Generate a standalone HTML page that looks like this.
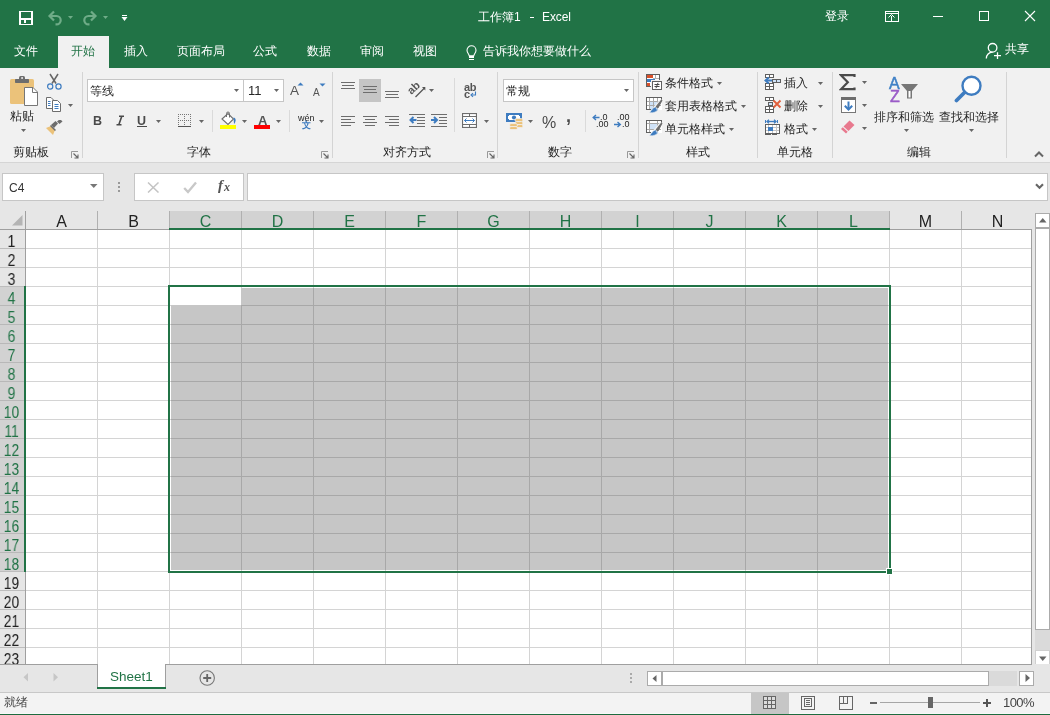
<!DOCTYPE html>
<html><head><meta charset="utf-8"><style>
html,body{margin:0;padding:0;width:1050px;height:715px;overflow:hidden;background:#fff}
body{position:relative;font-family:"Liberation Sans",sans-serif}
.a{position:absolute}
.t{white-space:nowrap;will-change:transform}
.hd{font-size:16px;line-height:16px;text-align:center}
.rn{font-size:16px;line-height:16px;text-align:center;transform:scaleX(0.86);transform-origin:11.5px 0}
</style></head><body>
<div class="a" style="left:0px;top:0px;width:1050px;height:68px;background:#217346;"></div>
<div class="a" style="left:19px;top:11px;width:14px;height:1px;background:#fff;"></div>
<div class="a" style="left:19px;top:24px;width:14px;height:1px;background:#fff;"></div>
<div class="a" style="left:19px;top:11px;width:2px;height:14px;background:#fff;"></div>
<div class="a" style="left:31px;top:11px;width:2px;height:14px;background:#fff;"></div>
<div class="a" style="left:21px;top:18px;width:10px;height:2px;background:#fff;"></div>
<div class="a" style="left:24px;top:20px;width:2px;height:3px;background:#fff;"></div>
<svg class="a" style="left:47px;top:9px;" width="17" height="17" viewBox="0 0 17 17"><path d="M3 7 H9.5 A4.2 4.2 0 0 1 9.5 15.4 H8.5" fill="none" stroke="#6fac88" stroke-width="2.2"/><path d="M7 2.5 L2.5 7 L7 11.5" fill="none" stroke="#6fac88" stroke-width="2.2"/></svg>
<svg class="a" style="left:68px;top:16px;" width="6" height="4" viewBox="0 0 6 4"><path d="M0 0H5L2.5 3Z" fill="#6fac88"/></svg>
<svg class="a" style="left:81px;top:9px;" width="17" height="17" viewBox="0 0 17 17"><path d="M14 7 H7.5 A4.2 4.2 0 0 0 7.5 15.4 H8.5" fill="none" stroke="#6fac88" stroke-width="2.2"/><path d="M10 2.5 L14.5 7 L10 11.5" fill="none" stroke="#6fac88" stroke-width="2.2"/></svg>
<svg class="a" style="left:103px;top:16px;" width="6" height="4" viewBox="0 0 6 4"><path d="M0 0H5L2.5 3Z" fill="#6fac88"/></svg>
<div class="a" style="left:122px;top:15px;width:5px;height:1px;background:#fff;"></div>
<svg class="a" style="left:121px;top:17px;" width="7" height="5" viewBox="0 0 7 5"><path d="M0.5 0H6.5L3.5 4Z" fill="#fff"/></svg>
<div class="a t" style="left:478px;top:11px;font-size:12px;line-height:12px;color:#fff;">工作簿1</div>
<div class="a" style="left:530px;top:17px;width:4px;height:1px;background:#fff;"></div>
<div class="a t" style="left:542px;top:11px;font-size:12px;line-height:12px;color:#fff;letter-spacing:-0.1px">Excel</div>
<div class="a t" style="left:825px;top:10px;font-size:12px;line-height:12px;color:#fff;">登录</div>
<div class="a" style="left:885px;top:11px;width:14px;height:1px;background:#fff;"></div>
<div class="a" style="left:885px;top:21px;width:14px;height:1px;background:#fff;"></div>
<div class="a" style="left:885px;top:11px;width:1px;height:11px;background:#fff;"></div>
<div class="a" style="left:898px;top:11px;width:1px;height:11px;background:#fff;"></div>
<div class="a" style="left:885px;top:13px;width:14px;height:1px;background:#fff;"></div>
<div class="a" style="left:891px;top:16px;width:1px;height:5px;background:#fff;"></div>
<svg class="a" style="left:888px;top:14px;" width="7" height="4" viewBox="0 0 7 4"><path d="M0.5 3.5L3.5 0.5L6.5 3.5" fill="none" stroke="#fff" stroke-width="1"/></svg>
<div class="a" style="left:933px;top:16px;width:10px;height:1px;background:#fff;"></div>
<div class="a" style="left:979px;top:11px;width:10px;height:10px;border:1px solid #fff;box-sizing:border-box;"></div>
<svg class="a" style="left:1024px;top:10px;" width="12" height="12" viewBox="0 0 12 12"><path d="M1 1L11 11M11 1L1 11" stroke="#fff" stroke-width="1.1"/></svg>
<div class="a" style="left:58px;top:36px;width:51px;height:32px;background:#f1f1f1;"></div>
<div class="a t" style="left:14px;top:45px;font-size:12px;line-height:12px;color:#fff;">文件</div>
<div class="a t" style="left:124px;top:45px;font-size:12px;line-height:12px;color:#fff;">插入</div>
<div class="a t" style="left:177px;top:45px;font-size:12px;line-height:12px;color:#fff;">页面布局</div>
<div class="a t" style="left:253px;top:45px;font-size:12px;line-height:12px;color:#fff;">公式</div>
<div class="a t" style="left:307px;top:45px;font-size:12px;line-height:12px;color:#fff;">数据</div>
<div class="a t" style="left:360px;top:45px;font-size:12px;line-height:12px;color:#fff;">审阅</div>
<div class="a t" style="left:413px;top:45px;font-size:12px;line-height:12px;color:#fff;">视图</div>
<div class="a t" style="left:71px;top:45px;font-size:12px;line-height:12px;color:#217346;">开始</div>
<svg class="a" style="left:465px;top:45px;" width="13" height="16" viewBox="0 0 13 16"><path d="M4.2 10.8 C4 8.8 2 7.8 2 5.2 A4.5 4.5 0 0 1 11 5.2 C11 7.8 9 8.8 8.8 10.8 Z" fill="none" stroke="#fff" stroke-width="1.1"/><rect x="4" y="11" width="5" height="2" fill="#fff"/><rect x="4" y="14" width="5" height="1" fill="#fff"/></svg>
<div class="a t" style="left:483px;top:45px;font-size:12px;line-height:12px;color:#fff;">告诉我你想要做什么</div>
<svg class="a" style="left:984px;top:41px;" width="18" height="19" viewBox="0 0 18 19"><circle cx="8.6" cy="6.8" r="4.3" fill="none" stroke="#fff" stroke-width="1.3"/><path d="M2.3 17.5 C2.3 14 5 11 8.6 11.1" fill="none" stroke="#fff" stroke-width="1.3"/><path d="M13.5 11.2V18 M10 14.6H17" stroke="#fff" stroke-width="1.3"/></svg>
<div class="a t" style="left:1005px;top:43px;font-size:12px;line-height:12px;color:#fff;">共享</div>
<div class="a" style="left:0px;top:68px;width:1050px;height:94px;background:#f1f1f1;"></div>
<div class="a" style="left:0px;top:162px;width:1050px;height:1px;background:#d5d5d5;"></div>
<div class="a" style="left:82px;top:72px;width:1px;height:86px;background:#d4d4d4;"></div>
<div class="a" style="left:332px;top:72px;width:1px;height:86px;background:#d4d4d4;"></div>
<div class="a" style="left:497px;top:72px;width:1px;height:86px;background:#d4d4d4;"></div>
<div class="a" style="left:638px;top:72px;width:1px;height:86px;background:#d4d4d4;"></div>
<div class="a" style="left:757px;top:72px;width:1px;height:86px;background:#d4d4d4;"></div>
<div class="a" style="left:832px;top:72px;width:1px;height:86px;background:#d4d4d4;"></div>
<div class="a" style="left:1006px;top:72px;width:1px;height:86px;background:#d4d4d4;"></div>
<div class="a t" style="left:13px;top:146px;font-size:12px;line-height:12px;color:#262626;">剪贴板</div>
<div class="a t" style="left:187px;top:146px;font-size:12px;line-height:12px;color:#262626;">字体</div>
<div class="a t" style="left:383px;top:146px;font-size:12px;line-height:12px;color:#262626;">对齐方式</div>
<div class="a t" style="left:548px;top:146px;font-size:12px;line-height:12px;color:#262626;">数字</div>
<div class="a t" style="left:686px;top:146px;font-size:12px;line-height:12px;color:#262626;">样式</div>
<div class="a t" style="left:777px;top:146px;font-size:12px;line-height:12px;color:#262626;">单元格</div>
<div class="a t" style="left:907px;top:146px;font-size:12px;line-height:12px;color:#262626;">编辑</div>
<svg class="a" style="left:71px;top:151px;" width="8" height="8" viewBox="0 0 8 8"><path d="M0.5 7V0.5H7" fill="none" stroke="#999" stroke-width="1"/><path d="M2.5 2.5L6.5 6.5 M7 3.5V7H3.5" fill="none" stroke="#666" stroke-width="1.1"/></svg>
<svg class="a" style="left:321px;top:151px;" width="8" height="8" viewBox="0 0 8 8"><path d="M0.5 7V0.5H7" fill="none" stroke="#999" stroke-width="1"/><path d="M2.5 2.5L6.5 6.5 M7 3.5V7H3.5" fill="none" stroke="#666" stroke-width="1.1"/></svg>
<svg class="a" style="left:487px;top:151px;" width="8" height="8" viewBox="0 0 8 8"><path d="M0.5 7V0.5H7" fill="none" stroke="#999" stroke-width="1"/><path d="M2.5 2.5L6.5 6.5 M7 3.5V7H3.5" fill="none" stroke="#666" stroke-width="1.1"/></svg>
<svg class="a" style="left:627px;top:151px;" width="8" height="8" viewBox="0 0 8 8"><path d="M0.5 7V0.5H7" fill="none" stroke="#999" stroke-width="1"/><path d="M2.5 2.5L6.5 6.5 M7 3.5V7H3.5" fill="none" stroke="#666" stroke-width="1.1"/></svg>
<svg class="a" style="left:9px;top:75px;" width="31" height="32" viewBox="0 0 31 32"><rect x="1" y="4" width="24" height="25" rx="1.6" fill="#ebc27a"/><rect x="6" y="4" width="14" height="4" rx="0.8" fill="#6d6d6d"/><rect x="10" y="1" width="6" height="4" rx="1.5" fill="#6d6d6d"/><rect x="12.3" y="2.2" width="1.6" height="1.6" fill="#fff"/><path d="M15.5 12.5H24L28.5 17V30.5H15.5Z" fill="#fff" stroke="#777" stroke-width="1"/><path d="M23.5 12.5V17.5H28.5" fill="none" stroke="#777" stroke-width="1"/></svg>
<div class="a t" style="left:10px;top:110px;font-size:12px;line-height:12px;color:#262626;">粘贴</div>
<svg class="a" style="left:21px;top:129px;" width="6" height="4" viewBox="0 0 6 4"><path d="M0 0H5L2.5 3Z" fill="#666"/></svg>
<svg class="a" style="left:45px;top:73px;" width="18" height="18" viewBox="0 0 18 18"><path d="M5 1L11 10.5 M13 1L7 10.5" stroke="#666" stroke-width="1.5"/><circle cx="5.2" cy="13.5" r="2.6" fill="none" stroke="#3e7cc0" stroke-width="1.2"/><circle cx="13.5" cy="13.5" r="2.6" fill="none" stroke="#3e7cc0" stroke-width="1.2"/></svg>
<svg class="a" style="left:45px;top:97px;" width="18" height="16" viewBox="0 0 18 16"><path d="M1.5 0.5H6L8.5 3V11.5H1.5Z" fill="#fff" stroke="#6d6d6d" stroke-width="1"/><path d="M7.5 3.5H12.5L15.5 6.5V14.5H7.5Z" fill="#fff" stroke="#6d6d6d" stroke-width="1"/><path d="M3 4.5H5.5 M3 6.5H5.5 M3 8.5H5.5" stroke="#3e7cc0" stroke-width="1"/><path d="M9.5 7.5H13.5 M9.5 9.5H13.5 M9.5 11.5H13.5" stroke="#3e7cc0" stroke-width="1"/></svg>
<svg class="a" style="left:68px;top:104px;" width="6" height="4" viewBox="0 0 6 4"><path d="M0 0H5L2.5 3Z" fill="#666"/></svg>
<svg class="a" style="left:45px;top:120px;" width="18" height="16" viewBox="0 0 18 16"><path d="M1 8 L6 6 L10 10 L8 15 Z" fill="#ebc27a"/><path d="M6 5 L10.5 1 L13 3.5 L9 8Z" fill="#6d6d6d"/><path d="M12 1.5 L15 -1 L17.5 1.5 L14.5 4Z" fill="#6d6d6d"/><path d="M5.5 5.5 L10.5 10.5" stroke="#6d6d6d" stroke-width="1.5"/></svg>
<div class="a" style="left:87px;top:79px;width:157px;height:23px;background:#fff;border:1px solid #c6c6c6;box-sizing:border-box;"></div>
<div class="a" style="left:243px;top:79px;width:41px;height:23px;background:#fff;border:1px solid #c6c6c6;box-sizing:border-box;"></div>
<div class="a t" style="left:90px;top:85px;font-size:12px;line-height:12px;color:#262626;">等线</div>
<svg class="a" style="left:234px;top:89px;" width="6" height="4" viewBox="0 0 6 4"><path d="M0 0H5L2.5 3Z" fill="#666"/></svg>
<div class="a t" style="left:248px;top:84px;font-size:13px;line-height:13px;color:#262626;">11</div>
<svg class="a" style="left:274px;top:89px;" width="6" height="4" viewBox="0 0 6 4"><path d="M0 0H5L2.5 3Z" fill="#666"/></svg>
<div class="a t" style="left:290px;top:84px;font-size:13.5px;line-height:13.5px;color:#555;">A</div>
<svg class="a" style="left:297px;top:82px;" width="7" height="5" viewBox="0 0 7 5"><path d="M0.5 3.5H6.5L3.5 0.5Z" fill="#3e7cc0"/></svg>
<div class="a t" style="left:313px;top:88px;font-size:10px;line-height:10px;color:#555;">A</div>
<svg class="a" style="left:319px;top:83px;" width="7" height="5" viewBox="0 0 7 5"><path d="M0.5 0.5H6.5L3.5 3.5Z" fill="#3e7cc0"/></svg>
<div class="a t" style="left:93px;top:115px;font-size:12.5px;line-height:12.5px;color:#4a4a4a;"><b>B</b></div>
<svg class="a" style="left:115px;top:115px;" width="10" height="12" viewBox="0 0 10 12"><path d="M4 1.2H9 M1.5 9.8H6.5 M6.8 1.2L3.8 9.8" fill="none" stroke="#4a4a4a" stroke-width="1.6"/></svg>
<div class="a t" style="left:137px;top:115px;font-size:12.5px;line-height:12.5px;color:#4a4a4a;"><b>U</b></div>
<div class="a" style="left:137px;top:126px;width:10px;height:1px;background:#4a4a4a;"></div>
<svg class="a" style="left:156px;top:120px;" width="6" height="4" viewBox="0 0 6 4"><path d="M0 0H5L2.5 3Z" fill="#666"/></svg>
<div class="a" style="left:212px;top:110px;width:1px;height:22px;background:#dadada;"></div>
<svg class="a" style="left:178px;top:114px;" width="13" height="13" viewBox="0 0 13 13"><g fill="#777"><rect x="0" y="0" width="1" height="1"/><rect x="0" y="6" width="1" height="1"/><rect x="2" y="0" width="1" height="1"/><rect x="2" y="6" width="1" height="1"/><rect x="4" y="0" width="1" height="1"/><rect x="4" y="6" width="1" height="1"/><rect x="6" y="0" width="1" height="1"/><rect x="6" y="6" width="1" height="1"/><rect x="8" y="0" width="1" height="1"/><rect x="8" y="6" width="1" height="1"/><rect x="10" y="0" width="1" height="1"/><rect x="10" y="6" width="1" height="1"/><rect x="12" y="0" width="1" height="1"/><rect x="12" y="6" width="1" height="1"/><rect x="0" y="0" width="1" height="1"/><rect x="6" y="0" width="1" height="1"/><rect x="12" y="0" width="1" height="1"/><rect x="0" y="2" width="1" height="1"/><rect x="6" y="2" width="1" height="1"/><rect x="12" y="2" width="1" height="1"/><rect x="0" y="4" width="1" height="1"/><rect x="6" y="4" width="1" height="1"/><rect x="12" y="4" width="1" height="1"/><rect x="0" y="6" width="1" height="1"/><rect x="6" y="6" width="1" height="1"/><rect x="12" y="6" width="1" height="1"/><rect x="0" y="8" width="1" height="1"/><rect x="6" y="8" width="1" height="1"/><rect x="12" y="8" width="1" height="1"/><rect x="0" y="10" width="1" height="1"/><rect x="6" y="10" width="1" height="1"/><rect x="12" y="10" width="1" height="1"/></g><rect x="0" y="12" width="13" height="1" fill="#555"/></svg>
<svg class="a" style="left:199px;top:120px;" width="6" height="4" viewBox="0 0 6 4"><path d="M0 0H5L2.5 3Z" fill="#666"/></svg>
<svg class="a" style="left:219px;top:111px;" width="19" height="19" viewBox="0 0 19 19"><path d="M3 8 L9 2.5 L14.5 8 L9 13.5 Z" fill="#fff" stroke="#6d6d6d" stroke-width="1.1"/><path d="M7.5 6 V2.5 A1.5 1.5 0 0 1 10.5 2.5 V6.5" fill="none" stroke="#6d6d6d" stroke-width="1"/><path d="M14.5 6.5 C17 7 17.5 10 15 13 Z" fill="#3e7cc0"/><rect x="1" y="14" width="16" height="4" fill="#ffff00"/></svg>
<svg class="a" style="left:242px;top:120px;" width="6" height="4" viewBox="0 0 6 4"><path d="M0 0H5L2.5 3Z" fill="#666"/></svg>
<div class="a t" style="left:258px;top:114px;font-size:13px;line-height:13px;color:#555;font-weight:bold">A</div>
<div class="a" style="left:254px;top:125px;width:16px;height:4px;background:#ff0000;"></div>
<svg class="a" style="left:276px;top:120px;" width="6" height="4" viewBox="0 0 6 4"><path d="M0 0H5L2.5 3Z" fill="#666"/></svg>
<div class="a" style="left:289px;top:110px;width:1px;height:22px;background:#dadada;"></div>
<div class="a t" style="left:298px;top:114px;font-size:9px;line-height:9px;color:#262626;">wén</div>
<div class="a t" style="left:302px;top:121px;font-size:8px;line-height:8px;color:#3e7cc0;font-weight:bold;font-size:9px">文</div>
<svg class="a" style="left:319px;top:120px;" width="6" height="4" viewBox="0 0 6 4"><path d="M0 0H5L2.5 3Z" fill="#666"/></svg>
<div class="a" style="left:341px;top:82px;width:14px;height:1px;background:#6d6d6d;"></div>
<div class="a" style="left:341px;top:88px;width:14px;height:1px;background:#6d6d6d;"></div>
<div class="a" style="left:342px;top:85px;width:12px;height:1px;background:#6d6d6d;"></div>
<div class="a" style="left:359px;top:79px;width:22px;height:23px;background:#c5c5c5;"></div>
<div class="a" style="left:363px;top:86px;width:14px;height:1px;background:#6d6d6d;"></div>
<div class="a" style="left:363px;top:92px;width:14px;height:1px;background:#6d6d6d;"></div>
<div class="a" style="left:364px;top:89px;width:12px;height:1px;background:#6d6d6d;"></div>
<div class="a" style="left:385px;top:91px;width:14px;height:1px;background:#6d6d6d;"></div>
<div class="a" style="left:385px;top:97px;width:14px;height:1px;background:#6d6d6d;"></div>
<div class="a" style="left:386px;top:94px;width:12px;height:1px;background:#6d6d6d;"></div>
<div class="a" style="left:341px;top:116px;width:14px;height:1px;background:#6d6d6d;"></div>
<div class="a" style="left:363px;top:116px;width:14px;height:1px;background:#6d6d6d;"></div>
<div class="a" style="left:385px;top:116px;width:14px;height:1px;background:#6d6d6d;"></div>
<div class="a" style="left:341px;top:122px;width:14px;height:1px;background:#6d6d6d;"></div>
<div class="a" style="left:363px;top:122px;width:14px;height:1px;background:#6d6d6d;"></div>
<div class="a" style="left:385px;top:122px;width:14px;height:1px;background:#6d6d6d;"></div>
<div class="a" style="left:341px;top:119px;width:10px;height:1px;background:#6d6d6d;"></div>
<div class="a" style="left:365px;top:119px;width:10px;height:1px;background:#6d6d6d;"></div>
<div class="a" style="left:389px;top:119px;width:10px;height:1px;background:#6d6d6d;"></div>
<div class="a" style="left:341px;top:125px;width:10px;height:1px;background:#6d6d6d;"></div>
<div class="a" style="left:365px;top:125px;width:10px;height:1px;background:#6d6d6d;"></div>
<div class="a" style="left:389px;top:125px;width:10px;height:1px;background:#6d6d6d;"></div>
<svg class="a" style="left:407px;top:80px;" width="20" height="19" viewBox="0 0 20 19"><text x="0" y="12" font-size="11" font-family="Liberation Sans" font-weight="bold" fill="#555" transform="rotate(-45 6 8)">ab</text><path d="M8.5 17 L17.5 8" stroke="#555" stroke-width="1.3"/><path d="M15 7 H18.3 V10.5 Z" fill="#555"/></svg>
<svg class="a" style="left:429px;top:89px;" width="6" height="4" viewBox="0 0 6 4"><path d="M0 0H5L2.5 3Z" fill="#666"/></svg>
<div class="a" style="left:454px;top:78px;width:1px;height:54px;background:#dadada;"></div>
<div class="a t" style="left:464px;top:82px;font-size:11px;line-height:11px;color:#555;font-weight:bold;letter-spacing:-0.3px">ab</div>
<div class="a t" style="left:464px;top:89px;font-size:11px;line-height:11px;color:#555;font-weight:bold">c</div>
<svg class="a" style="left:470px;top:91px;" width="7" height="7" viewBox="0 0 7 7"><path d="M5.5 0.5V4H1.5" fill="none" stroke="#3e7cc0" stroke-width="1.1"/><path d="M3 2.2L1 4L3 5.8" fill="none" stroke="#3e7cc0" stroke-width="1.1"/></svg>
<div class="a" style="left:409px;top:114px;width:16px;height:1px;background:#6d6d6d;"></div>
<div class="a" style="left:409px;top:126px;width:16px;height:1px;background:#6d6d6d;"></div>
<div class="a" style="left:417px;top:117px;width:8px;height:1px;background:#6d6d6d;"></div>
<div class="a" style="left:417px;top:120px;width:8px;height:1px;background:#6d6d6d;"></div>
<div class="a" style="left:417px;top:123px;width:8px;height:1px;background:#6d6d6d;"></div>
<div class="a" style="left:431px;top:114px;width:16px;height:1px;background:#6d6d6d;"></div>
<div class="a" style="left:431px;top:126px;width:16px;height:1px;background:#6d6d6d;"></div>
<div class="a" style="left:439px;top:117px;width:8px;height:1px;background:#6d6d6d;"></div>
<div class="a" style="left:439px;top:120px;width:8px;height:1px;background:#6d6d6d;"></div>
<div class="a" style="left:439px;top:123px;width:8px;height:1px;background:#6d6d6d;"></div>
<svg class="a" style="left:409px;top:116px;" width="8" height="8" viewBox="0 0 8 8"><path d="M7.5 4H2 M4.5 1L1.5 4L4.5 7" fill="none" stroke="#3e7cc0" stroke-width="2"/></svg>
<svg class="a" style="left:431px;top:116px;" width="8" height="8" viewBox="0 0 8 8"><path d="M0 4H5.5 M3 1L6 4L3 7" fill="none" stroke="#3e7cc0" stroke-width="2"/></svg>
<svg class="a" style="left:462px;top:113px;" width="15" height="15" viewBox="0 0 15 15"><rect x="0.5" y="0.5" width="14" height="14" fill="#fff" stroke="#6d6d6d" stroke-width="1.2"/><path d="M0.5 3.5H14.5 M0.5 11.5H14.5 M7.5 0.5V3.5 M7.5 11.5V14.5" stroke="#6d6d6d"/><path d="M2.5 7.5H12.5" stroke="#3e7cc0" stroke-width="1"/><path d="M4.5 5.5L2.5 7.5L4.5 9.5 M10.5 5.5L12.5 7.5L10.5 9.5" fill="none" stroke="#3e7cc0" stroke-width="1"/></svg>
<svg class="a" style="left:484px;top:120px;" width="6" height="4" viewBox="0 0 6 4"><path d="M0 0H5L2.5 3Z" fill="#666"/></svg>
<div class="a" style="left:503px;top:79px;width:131px;height:23px;background:#fff;border:1px solid #c6c6c6;box-sizing:border-box;"></div>
<div class="a t" style="left:506px;top:85px;font-size:12px;line-height:12px;color:#262626;">常规</div>
<svg class="a" style="left:624px;top:89px;" width="6" height="4" viewBox="0 0 6 4"><path d="M0 0H5L2.5 3Z" fill="#666"/></svg>
<svg class="a" style="left:506px;top:113px;" width="19" height="19" viewBox="0 0 19 19"><path d="M1 1H15V8H1Z" fill="#fff" stroke="#3e7cc0" stroke-width="2"/><path d="M0 0H3V3H0Z M13 0H16V3H13Z M0 6H3V9H0Z" fill="#3e7cc0"/><circle cx="8" cy="4.5" r="2.1" fill="#3e7cc0"/><g fill="#ebc27a" stroke="#f1f1f1" stroke-width="0.8"><rect x="9" y="5.6" width="8" height="3" rx="1.5"/><rect x="9" y="8.6" width="8" height="3" rx="1.5"/><rect x="9" y="11.6" width="8" height="3" rx="1.5"/><rect x="3.5" y="10.6" width="8" height="3" rx="1.5"/><rect x="3.5" y="13.6" width="8" height="3" rx="1.5"/></g></svg>
<svg class="a" style="left:528px;top:120px;" width="6" height="4" viewBox="0 0 6 4"><path d="M0 0H5L2.5 3Z" fill="#666"/></svg>
<div class="a t" style="left:542px;top:115px;font-size:16px;line-height:16px;color:#4a4a4a;">%</div>
<div class="a t" style="left:566px;top:107px;font-size:18px;line-height:18px;color:#4a4a4a;"><b>,</b></div>
<div class="a" style="left:585px;top:110px;width:1px;height:22px;background:#dadada;"></div>
<div class="a t" style="left:600px;top:113px;font-size:9px;line-height:9px;color:#262626;">.0</div>
<div class="a t" style="left:596px;top:120px;font-size:9px;line-height:9px;color:#262626;">.00</div>
<svg class="a" style="left:592px;top:114px;" width="8" height="7" viewBox="0 0 8 7"><path d="M7.5 3.5H1.5 M4 1L1.2 3.5L4 6" fill="none" stroke="#3e7cc0" stroke-width="1.4"/></svg>
<div class="a t" style="left:617px;top:113px;font-size:9px;line-height:9px;color:#262626;">.00</div>
<div class="a t" style="left:622px;top:120px;font-size:9px;line-height:9px;color:#262626;">.0</div>
<svg class="a" style="left:614px;top:121px;" width="8" height="7" viewBox="0 0 8 7"><path d="M0 3.5H6 M3.5 1L6.3 3.5L3.5 6" fill="none" stroke="#3e7cc0" stroke-width="1.4"/></svg>
<div class="a" style="left:646px;top:74px;width:14px;height:13px;background:#fff;"></div>
<div class="a" style="left:646px;top:74px;width:14px;height:1px;background:#5f5f5f;"></div>
<div class="a" style="left:646px;top:74px;width:1px;height:13px;background:#5f5f5f;"></div>
<div class="a" style="left:659px;top:74px;width:1px;height:6px;background:#5f5f5f;"></div>
<div class="a" style="left:646px;top:86px;width:6px;height:1px;background:#5f5f5f;"></div>
<div class="a" style="left:647px;top:75px;width:6px;height:3px;background:#d9502a;"></div>
<div class="a" style="left:655px;top:75px;width:1px;height:3px;background:#b0b0b0;"></div>
<div class="a" style="left:653px;top:78px;width:6px;height:1px;background:#b0b0b0;"></div>
<div class="a" style="left:647px;top:79px;width:8px;height:3px;background:#3e7cc0;"></div>
<div class="a" style="left:647px;top:83px;width:3px;height:3px;background:#d9502a;"></div>
<div class="a" style="left:651px;top:80px;width:12px;height:11px;background:#f1f1f1;"></div>
<div class="a" style="left:652px;top:81px;width:10px;height:9px;background:#fff;"></div>
<div class="a" style="left:652px;top:81px;width:10px;height:1px;background:#5f5f5f;"></div>
<div class="a" style="left:652px;top:89px;width:10px;height:1px;background:#5f5f5f;"></div>
<div class="a" style="left:652px;top:81px;width:1px;height:9px;background:#5f5f5f;"></div>
<div class="a" style="left:661px;top:81px;width:1px;height:9px;background:#5f5f5f;"></div>
<div class="a" style="left:653px;top:82px;width:8px;height:7px;background:#fff;"></div>
<svg class="a" style="left:653px;top:82px;" width="8" height="7" viewBox="0 0 8 7"><path d="M1.5 2.5H6.5 M1.5 4.5H6.5 M5 0.8L3 6.2" stroke="#4a4a4a" stroke-width="1"/></svg>
<div class="a t" style="left:665px;top:77px;font-size:12px;line-height:12px;color:#262626;">条件格式</div>
<svg class="a" style="left:717px;top:82px;" width="6" height="4" viewBox="0 0 6 4"><path d="M0 0H5L2.5 3Z" fill="#666"/></svg>
<div class="a" style="left:646px;top:97px;width:16px;height:13px;background:#fff;"></div>
<div class="a" style="left:650px;top:102px;width:8px;height:8px;background:#cfe2f7;"></div>
<div class="a" style="left:649px;top:98px;width:1px;height:11px;background:#a8a8a8;"></div>
<div class="a" style="left:653px;top:98px;width:1px;height:11px;background:#a8a8a8;"></div>
<div class="a" style="left:657px;top:98px;width:1px;height:11px;background:#a8a8a8;"></div>
<div class="a" style="left:647px;top:101px;width:14px;height:1px;background:#a8a8a8;"></div>
<div class="a" style="left:647px;top:105px;width:14px;height:1px;background:#a8a8a8;"></div>
<div class="a" style="left:646px;top:97px;width:16px;height:1px;background:#5f5f5f;"></div>
<div class="a" style="left:646px;top:97px;width:1px;height:13px;background:#5f5f5f;"></div>
<div class="a" style="left:661px;top:97px;width:1px;height:3px;background:#5f5f5f;"></div>
<div class="a" style="left:646px;top:109px;width:5px;height:1px;background:#5f5f5f;"></div>
<div class="a" style="left:659px;top:99px;width:3px;height:0px;background:#f1f1f1;"></div>
<svg class="a" style="left:648px;top:99px;" width="16" height="16" viewBox="0 0 16 16"><path d="M15 0.5 L10 8 L7.5 10 L5 8.5 L12 0.5 Z" fill="#f1f1f1"/><path d="M13.8 1.5 L10.3 8.2 L9 9.4 L8 8.6 L8.6 7.2 L13.5 1.2 Z" fill="#6d6d6d" stroke="#6d6d6d" stroke-width="1.2"/><path d="M7.5 8 C5 8.5 3.5 11 1.5 13.8 C5.5 14 9 13 10.2 10.2 Z" fill="#3e7cc0" stroke="#f1f1f1" stroke-width="0.6"/><path d="M8.2 9.3 L9.3 10.8" stroke="#fff" stroke-width="0.9"/></svg>
<div class="a t" style="left:665px;top:100px;font-size:12px;line-height:12px;color:#262626;">套用表格格式</div>
<svg class="a" style="left:741px;top:105px;" width="6" height="4" viewBox="0 0 6 4"><path d="M0 0H5L2.5 3Z" fill="#666"/></svg>
<div class="a" style="left:646px;top:120px;width:16px;height:13px;background:#fff;"></div>
<div class="a" style="left:650px;top:124px;width:8px;height:6px;background:#cfe2f7;"></div>
<div class="a" style="left:649px;top:121px;width:1px;height:11px;background:#a8a8a8;"></div>
<div class="a" style="left:657px;top:121px;width:1px;height:11px;background:#a8a8a8;"></div>
<div class="a" style="left:647px;top:123px;width:14px;height:1px;background:#a8a8a8;"></div>
<div class="a" style="left:647px;top:129px;width:14px;height:1px;background:#a8a8a8;"></div>
<div class="a" style="left:646px;top:120px;width:16px;height:1px;background:#5f5f5f;"></div>
<div class="a" style="left:646px;top:120px;width:1px;height:13px;background:#5f5f5f;"></div>
<div class="a" style="left:661px;top:120px;width:1px;height:3px;background:#5f5f5f;"></div>
<div class="a" style="left:646px;top:132px;width:5px;height:1px;background:#5f5f5f;"></div>
<svg class="a" style="left:648px;top:122px;" width="16" height="16" viewBox="0 0 16 16"><path d="M15 0.5 L10 8 L7.5 10 L5 8.5 L12 0.5 Z" fill="#f1f1f1"/><path d="M13.8 1.5 L10.3 8.2 L9 9.4 L8 8.6 L8.6 7.2 L13.5 1.2 Z" fill="#6d6d6d" stroke="#6d6d6d" stroke-width="1.2"/><path d="M7.5 8 C5 8.5 3.5 11 1.5 13.8 C5.5 14 9 13 10.2 10.2 Z" fill="#3e7cc0" stroke="#f1f1f1" stroke-width="0.6"/><path d="M8.2 9.3 L9.3 10.8" stroke="#fff" stroke-width="0.9"/></svg>
<div class="a t" style="left:665px;top:123px;font-size:12px;line-height:12px;color:#262626;">单元格样式</div>
<svg class="a" style="left:729px;top:128px;" width="6" height="4" viewBox="0 0 6 4"><path d="M0 0H5L2.5 3Z" fill="#666"/></svg>
<div class="a" style="left:765px;top:74px;width:9px;height:4px;background:#fff;"></div>
<div class="a" style="left:765px;top:74px;width:9px;height:1px;background:#5f5f5f;"></div>
<div class="a" style="left:765px;top:77px;width:9px;height:1px;background:#5f5f5f;"></div>
<div class="a" style="left:765px;top:74px;width:1px;height:4px;background:#5f5f5f;"></div>
<div class="a" style="left:773px;top:74px;width:1px;height:4px;background:#5f5f5f;"></div>
<div class="a" style="left:769px;top:74px;width:1px;height:4px;background:#5f5f5f;"></div>
<div class="a" style="left:772px;top:79px;width:9px;height:4px;background:#cfe2f7;"></div>
<div class="a" style="left:772px;top:79px;width:9px;height:1px;background:#5f5f5f;"></div>
<div class="a" style="left:772px;top:82px;width:9px;height:1px;background:#5f5f5f;"></div>
<div class="a" style="left:772px;top:79px;width:1px;height:4px;background:#5f5f5f;"></div>
<div class="a" style="left:780px;top:79px;width:1px;height:4px;background:#5f5f5f;"></div>
<div class="a" style="left:776px;top:79px;width:1px;height:4px;background:#5f5f5f;"></div>
<div class="a" style="left:765px;top:83px;width:9px;height:7px;background:#fff;"></div>
<div class="a" style="left:765px;top:83px;width:9px;height:1px;background:#5f5f5f;"></div>
<div class="a" style="left:765px;top:89px;width:9px;height:1px;background:#5f5f5f;"></div>
<div class="a" style="left:765px;top:83px;width:1px;height:7px;background:#5f5f5f;"></div>
<div class="a" style="left:773px;top:83px;width:1px;height:7px;background:#5f5f5f;"></div>
<div class="a" style="left:765px;top:86px;width:9px;height:1px;background:#5f5f5f;"></div>
<div class="a" style="left:769px;top:83px;width:1px;height:7px;background:#5f5f5f;"></div>
<div class="a" style="left:766px;top:84px;width:3px;height:1px;background:#fff;"></div>
<svg class="a" style="left:764px;top:76px;" width="9" height="9" viewBox="0 0 9 9"><path d="M8 4.5H2.5" stroke="#3e7cc0" stroke-width="2"/><path d="M4.8 1.5L1.5 4.5L4.8 7.5" fill="none" stroke="#3e7cc0" stroke-width="2"/></svg>
<div class="a t" style="left:784px;top:77px;font-size:12px;line-height:12px;color:#262626;">插入</div>
<svg class="a" style="left:818px;top:82px;" width="6" height="4" viewBox="0 0 6 4"><path d="M0 0H5L2.5 3Z" fill="#666"/></svg>
<div class="a" style="left:765px;top:97px;width:9px;height:4px;background:#fff;"></div>
<div class="a" style="left:765px;top:97px;width:9px;height:1px;background:#5f5f5f;"></div>
<div class="a" style="left:765px;top:100px;width:9px;height:1px;background:#5f5f5f;"></div>
<div class="a" style="left:765px;top:97px;width:1px;height:4px;background:#5f5f5f;"></div>
<div class="a" style="left:773px;top:97px;width:1px;height:4px;background:#5f5f5f;"></div>
<div class="a" style="left:769px;top:97px;width:1px;height:4px;background:#5f5f5f;"></div>
<div class="a" style="left:768px;top:102px;width:5px;height:4px;background:#cfe2f7;"></div>
<div class="a" style="left:768px;top:102px;width:5px;height:1px;background:#5f5f5f;"></div>
<div class="a" style="left:768px;top:105px;width:5px;height:1px;background:#5f5f5f;"></div>
<div class="a" style="left:768px;top:102px;width:1px;height:4px;background:#5f5f5f;"></div>
<div class="a" style="left:772px;top:102px;width:1px;height:4px;background:#5f5f5f;"></div>
<div class="a" style="left:765px;top:106px;width:9px;height:7px;background:#fff;"></div>
<div class="a" style="left:765px;top:106px;width:9px;height:1px;background:#5f5f5f;"></div>
<div class="a" style="left:765px;top:112px;width:9px;height:1px;background:#5f5f5f;"></div>
<div class="a" style="left:765px;top:106px;width:1px;height:7px;background:#5f5f5f;"></div>
<div class="a" style="left:773px;top:106px;width:1px;height:7px;background:#5f5f5f;"></div>
<div class="a" style="left:765px;top:109px;width:9px;height:1px;background:#5f5f5f;"></div>
<div class="a" style="left:769px;top:106px;width:1px;height:7px;background:#5f5f5f;"></div>
<svg class="a" style="left:772px;top:99px;" width="10" height="10" viewBox="0 0 10 10"><path d="M1.5 1.5L8.5 8.5 M8.5 1.5L1.5 8.5" stroke="#e0603d" stroke-width="1.9"/></svg>
<div class="a t" style="left:784px;top:100px;font-size:12px;line-height:12px;color:#262626;">删除</div>
<svg class="a" style="left:818px;top:105px;" width="6" height="4" viewBox="0 0 6 4"><path d="M0 0H5L2.5 3Z" fill="#666"/></svg>
<div class="a" style="left:765px;top:120px;width:1px;height:3px;background:#3e7cc0;"></div>
<div class="a" style="left:777px;top:120px;width:1px;height:3px;background:#3e7cc0;"></div>
<svg class="a" style="left:766px;top:119px;" width="11" height="5" viewBox="0 0 11 5"><path d="M1.5 2.5H9.5" stroke="#3e7cc0" stroke-width="1.3"/><path d="M3 0.8L1 2.5L3 4.2 M8 0.8L10 2.5L8 4.2" fill="none" stroke="#3e7cc0" stroke-width="1.3"/></svg>
<div class="a" style="left:765px;top:124px;width:15px;height:10px;background:#fff;"></div>
<div class="a" style="left:765px;top:124px;width:15px;height:1px;background:#5f5f5f;"></div>
<div class="a" style="left:765px;top:133px;width:15px;height:1px;background:#5f5f5f;"></div>
<div class="a" style="left:765px;top:124px;width:1px;height:10px;background:#5f5f5f;"></div>
<div class="a" style="left:779px;top:124px;width:1px;height:10px;background:#5f5f5f;"></div>
<div class="a" style="left:768px;top:125px;width:1px;height:8px;background:#c4c4c4;"></div>
<div class="a" style="left:772px;top:125px;width:1px;height:8px;background:#c4c4c4;"></div>
<div class="a" style="left:776px;top:125px;width:1px;height:8px;background:#c4c4c4;"></div>
<div class="a" style="left:766px;top:127px;width:13px;height:1px;background:#c4c4c4;"></div>
<div class="a" style="left:766px;top:130px;width:13px;height:1px;background:#c4c4c4;"></div>
<div class="a" style="left:768px;top:127px;width:5px;height:4px;background:#3e7cc0;"></div>
<div class="a" style="left:766px;top:134px;width:5px;height:1px;background:#5f5f5f;"></div>
<div class="a" style="left:772px;top:134px;width:5px;height:1px;background:#5f5f5f;"></div>
<div class="a" style="left:765px;top:133px;width:1px;height:2px;background:#5f5f5f;"></div>
<div class="a t" style="left:784px;top:123px;font-size:12px;line-height:12px;color:#262626;">格式</div>
<svg class="a" style="left:812px;top:128px;" width="6" height="4" viewBox="0 0 6 4"><path d="M0 0H5L2.5 3Z" fill="#666"/></svg>
<svg class="a" style="left:839px;top:74px;" width="18" height="17" viewBox="0 0 18 17"><path d="M15.5 3V1.2H2L8.8 8.2L2 15.2H15.5V13.5" fill="none" stroke="#4a4a4a" stroke-width="2.2"/></svg>
<svg class="a" style="left:862px;top:81px;" width="6" height="4" viewBox="0 0 6 4"><path d="M0 0H5L2.5 3Z" fill="#666"/></svg>
<svg class="a" style="left:841px;top:97px;" width="15" height="16" viewBox="0 0 15 16"><rect x="0.5" y="0.5" width="14" height="15" fill="#fff" stroke="#777"/><rect x="0" y="0" width="15" height="3" fill="#6d6d6d"/><path d="M7.5 4.5V12.5" stroke="#3e7cc0" stroke-width="2"/><path d="M3.8 8.8L7.5 12.5L11.2 8.8" fill="none" stroke="#3e7cc0" stroke-width="2"/></svg>
<svg class="a" style="left:862px;top:104px;" width="6" height="4" viewBox="0 0 6 4"><path d="M0 0H5L2.5 3Z" fill="#666"/></svg>
<svg class="a" style="left:840px;top:119px;" width="16" height="16" viewBox="0 0 16 16"><path d="M9.5 1.5 L14.5 6 L8.5 12 L3.5 7.5 Z" fill="#e8798e"/><path d="M2.8 8.3 L7.7 12.8 L6 14.5 L1 10Z" fill="#e8798e"/></svg>
<svg class="a" style="left:862px;top:127px;" width="6" height="4" viewBox="0 0 6 4"><path d="M0 0H5L2.5 3Z" fill="#666"/></svg>
<div class="a t" style="left:889px;top:76px;font-size:16px;line-height:16px;color:#3f80c6;-webkit-text-stroke:0.5px #3f80c6">A</div>
<div class="a t" style="left:890px;top:89px;font-size:16px;line-height:16px;color:#9b5cc8;-webkit-text-stroke:0.5px #9b5cc8">Z</div>
<svg class="a" style="left:900px;top:83px;" width="19" height="17" viewBox="0 0 19 17"><path d="M1 1H18L12 8V15.5H7V8Z" fill="#777"/><rect x="8.5" y="8" width="2" height="6.5" fill="#fff"/></svg>
<div class="a t" style="left:874px;top:111px;font-size:12px;line-height:12px;color:#262626;">排序和筛选</div>
<svg class="a" style="left:904px;top:129px;" width="6" height="4" viewBox="0 0 6 4"><path d="M0 0H5L2.5 3Z" fill="#666"/></svg>
<svg class="a" style="left:954px;top:75px;" width="29" height="29" viewBox="0 0 29 29"><circle cx="17.5" cy="10.8" r="9" fill="#fff" stroke="#3e7cc0" stroke-width="2.4"/><path d="M10.5 17.5 L2.5 25.5" stroke="#3e7cc0" stroke-width="3.8" stroke-linecap="round"/></svg>
<div class="a t" style="left:939px;top:111px;font-size:12px;line-height:12px;color:#262626;">查找和选择</div>
<svg class="a" style="left:969px;top:129px;" width="6" height="4" viewBox="0 0 6 4"><path d="M0 0H5L2.5 3Z" fill="#666"/></svg>
<svg class="a" style="left:1034px;top:150px;" width="10" height="8" viewBox="0 0 10 8"><path d="M1 6.5L5 2.5L9 6.5" fill="none" stroke="#666" stroke-width="2"/></svg>
<div class="a" style="left:0px;top:163px;width:1050px;height:48px;background:#e6e6e6;"></div>
<div class="a" style="left:2px;top:173px;width:102px;height:28px;background:#fff;border:1px solid #c6c6c6;box-sizing:border-box;"></div>
<div class="a t" style="left:9px;top:182px;font-size:12px;line-height:12px;color:#333;">C4</div>
<svg class="a" style="left:90px;top:184px;" width="8" height="5" viewBox="0 0 8 5"><path d="M0 0H7.5L3.75 4Z" fill="#777"/></svg>
<div class="a" style="left:118px;top:182px;width:2px;height:2px;background:#999;"></div>
<div class="a" style="left:118px;top:186px;width:2px;height:2px;background:#999;"></div>
<div class="a" style="left:118px;top:190px;width:2px;height:2px;background:#999;"></div>
<div class="a" style="left:134px;top:173px;width:110px;height:28px;background:#fff;border:1px solid #c6c6c6;box-sizing:border-box;"></div>
<svg class="a" style="left:147px;top:182px;" width="13" height="11" viewBox="0 0 13 11"><path d="M1 0.5L11.5 10.5M11.5 0.5L1 10.5" stroke="#c4c4c4" stroke-width="1.5"/></svg>
<svg class="a" style="left:183px;top:181px;" width="14" height="13" viewBox="0 0 14 13"><path d="M1.2 7L5 11L13 1.5" fill="none" stroke="#c8c8c8" stroke-width="2.4"/></svg>
<div class="a t" style="left:218px;top:176px;font-family:'Liberation Serif',serif;font-style:italic;font-weight:bold;font-size:15px;line-height:18px;color:#555">f</div>
<div class="a t" style="left:224px;top:179px;font-family:'Liberation Serif',serif;font-style:italic;font-weight:bold;font-size:12px;line-height:16px;color:#555">x</div>
<div class="a" style="left:247px;top:173px;width:801px;height:28px;background:#fff;border:1px solid #c6c6c6;box-sizing:border-box;"></div>
<svg class="a" style="left:1035px;top:183px;" width="9" height="7" viewBox="0 0 9 7"><path d="M1 1.2L4.5 4.8L8 1.2" fill="none" stroke="#666" stroke-width="2.1"/></svg>
<div class="a" style="left:0px;top:211px;width:1033px;height:18px;background:#e6e6e6;"></div>
<div class="a" style="left:0px;top:230px;width:25px;height:434px;background:#e6e6e6;"></div>
<div class="a" style="left:26px;top:230px;width:1006px;height:434px;background:#fff;"></div>
<svg class="a" style="left:12px;top:215px;" width="11" height="11" viewBox="0 0 11 11"><path d="M10.5 0V10.5H0Z" fill="#b4b4b4"/></svg>
<div class="a" style="left:170px;top:211px;width:719px;height:17px;background:#d2d2d2;"></div>
<div class="a" style="left:0px;top:229px;width:1032px;height:1px;background:#9f9f9f;"></div>
<div class="a" style="left:169px;top:228px;width:721px;height:2px;background:#217346;"></div>
<div class="a" style="left:97px;top:211px;width:1px;height:18px;background:#b0b0b0;"></div>
<div class="a" style="left:169px;top:211px;width:1px;height:17px;background:#b0b0b0;"></div>
<div class="a" style="left:241px;top:211px;width:1px;height:17px;background:#b0b0b0;"></div>
<div class="a" style="left:313px;top:211px;width:1px;height:17px;background:#b0b0b0;"></div>
<div class="a" style="left:385px;top:211px;width:1px;height:17px;background:#b0b0b0;"></div>
<div class="a" style="left:457px;top:211px;width:1px;height:17px;background:#b0b0b0;"></div>
<div class="a" style="left:529px;top:211px;width:1px;height:17px;background:#b0b0b0;"></div>
<div class="a" style="left:601px;top:211px;width:1px;height:17px;background:#b0b0b0;"></div>
<div class="a" style="left:673px;top:211px;width:1px;height:17px;background:#b0b0b0;"></div>
<div class="a" style="left:745px;top:211px;width:1px;height:17px;background:#b0b0b0;"></div>
<div class="a" style="left:817px;top:211px;width:1px;height:17px;background:#b0b0b0;"></div>
<div class="a" style="left:889px;top:211px;width:1px;height:17px;background:#b0b0b0;"></div>
<div class="a" style="left:961px;top:211px;width:1px;height:18px;background:#b0b0b0;"></div>
<div class="a" style="left:25px;top:211px;width:1px;height:453px;background:#9f9f9f;"></div>
<div class="a" style="left:0px;top:287px;width:24px;height:285px;background:#d2d2d2;"></div>
<div class="a" style="left:97px;top:230px;width:1px;height:434px;background:#d4d4d4;"></div>
<div class="a" style="left:169px;top:230px;width:1px;height:434px;background:#d4d4d4;"></div>
<div class="a" style="left:241px;top:230px;width:1px;height:434px;background:#d4d4d4;"></div>
<div class="a" style="left:313px;top:230px;width:1px;height:434px;background:#d4d4d4;"></div>
<div class="a" style="left:385px;top:230px;width:1px;height:434px;background:#d4d4d4;"></div>
<div class="a" style="left:457px;top:230px;width:1px;height:434px;background:#d4d4d4;"></div>
<div class="a" style="left:529px;top:230px;width:1px;height:434px;background:#d4d4d4;"></div>
<div class="a" style="left:601px;top:230px;width:1px;height:434px;background:#d4d4d4;"></div>
<div class="a" style="left:673px;top:230px;width:1px;height:434px;background:#d4d4d4;"></div>
<div class="a" style="left:745px;top:230px;width:1px;height:434px;background:#d4d4d4;"></div>
<div class="a" style="left:817px;top:230px;width:1px;height:434px;background:#d4d4d4;"></div>
<div class="a" style="left:889px;top:230px;width:1px;height:434px;background:#d4d4d4;"></div>
<div class="a" style="left:961px;top:230px;width:1px;height:434px;background:#d4d4d4;"></div>
<div class="a" style="left:26px;top:248px;width:1006px;height:1px;background:#d4d4d4;"></div>
<div class="a" style="left:0px;top:248px;width:25px;height:1px;background:#bdbdbd;"></div>
<div class="a" style="left:26px;top:267px;width:1006px;height:1px;background:#d4d4d4;"></div>
<div class="a" style="left:0px;top:267px;width:25px;height:1px;background:#bdbdbd;"></div>
<div class="a" style="left:26px;top:286px;width:1006px;height:1px;background:#d4d4d4;"></div>
<div class="a" style="left:0px;top:286px;width:25px;height:1px;background:#bdbdbd;"></div>
<div class="a" style="left:26px;top:305px;width:1006px;height:1px;background:#d4d4d4;"></div>
<div class="a" style="left:0px;top:305px;width:25px;height:1px;background:#b8b8b8;"></div>
<div class="a" style="left:26px;top:324px;width:1006px;height:1px;background:#d4d4d4;"></div>
<div class="a" style="left:0px;top:324px;width:25px;height:1px;background:#b8b8b8;"></div>
<div class="a" style="left:26px;top:343px;width:1006px;height:1px;background:#d4d4d4;"></div>
<div class="a" style="left:0px;top:343px;width:25px;height:1px;background:#b8b8b8;"></div>
<div class="a" style="left:26px;top:362px;width:1006px;height:1px;background:#d4d4d4;"></div>
<div class="a" style="left:0px;top:362px;width:25px;height:1px;background:#b8b8b8;"></div>
<div class="a" style="left:26px;top:381px;width:1006px;height:1px;background:#d4d4d4;"></div>
<div class="a" style="left:0px;top:381px;width:25px;height:1px;background:#b8b8b8;"></div>
<div class="a" style="left:26px;top:400px;width:1006px;height:1px;background:#d4d4d4;"></div>
<div class="a" style="left:0px;top:400px;width:25px;height:1px;background:#b8b8b8;"></div>
<div class="a" style="left:26px;top:419px;width:1006px;height:1px;background:#d4d4d4;"></div>
<div class="a" style="left:0px;top:419px;width:25px;height:1px;background:#b8b8b8;"></div>
<div class="a" style="left:26px;top:438px;width:1006px;height:1px;background:#d4d4d4;"></div>
<div class="a" style="left:0px;top:438px;width:25px;height:1px;background:#b8b8b8;"></div>
<div class="a" style="left:26px;top:457px;width:1006px;height:1px;background:#d4d4d4;"></div>
<div class="a" style="left:0px;top:457px;width:25px;height:1px;background:#b8b8b8;"></div>
<div class="a" style="left:26px;top:476px;width:1006px;height:1px;background:#d4d4d4;"></div>
<div class="a" style="left:0px;top:476px;width:25px;height:1px;background:#b8b8b8;"></div>
<div class="a" style="left:26px;top:495px;width:1006px;height:1px;background:#d4d4d4;"></div>
<div class="a" style="left:0px;top:495px;width:25px;height:1px;background:#b8b8b8;"></div>
<div class="a" style="left:26px;top:514px;width:1006px;height:1px;background:#d4d4d4;"></div>
<div class="a" style="left:0px;top:514px;width:25px;height:1px;background:#b8b8b8;"></div>
<div class="a" style="left:26px;top:533px;width:1006px;height:1px;background:#d4d4d4;"></div>
<div class="a" style="left:0px;top:533px;width:25px;height:1px;background:#b8b8b8;"></div>
<div class="a" style="left:26px;top:552px;width:1006px;height:1px;background:#d4d4d4;"></div>
<div class="a" style="left:0px;top:552px;width:25px;height:1px;background:#b8b8b8;"></div>
<div class="a" style="left:26px;top:571px;width:1006px;height:1px;background:#d4d4d4;"></div>
<div class="a" style="left:0px;top:571px;width:25px;height:1px;background:#bdbdbd;"></div>
<div class="a" style="left:26px;top:590px;width:1006px;height:1px;background:#d4d4d4;"></div>
<div class="a" style="left:0px;top:590px;width:25px;height:1px;background:#bdbdbd;"></div>
<div class="a" style="left:26px;top:609px;width:1006px;height:1px;background:#d4d4d4;"></div>
<div class="a" style="left:0px;top:609px;width:25px;height:1px;background:#bdbdbd;"></div>
<div class="a" style="left:26px;top:628px;width:1006px;height:1px;background:#d4d4d4;"></div>
<div class="a" style="left:0px;top:628px;width:25px;height:1px;background:#bdbdbd;"></div>
<div class="a" style="left:26px;top:647px;width:1006px;height:1px;background:#d4d4d4;"></div>
<div class="a" style="left:0px;top:647px;width:25px;height:1px;background:#bdbdbd;"></div>
<div class="a" style="left:24px;top:286px;width:2px;height:286px;background:#217346;"></div>
<div class="a" style="left:171px;top:288px;width:717px;height:282px;background:#c6c6c6;"></div>
<div class="a" style="left:170px;top:287px;width:71px;height:18px;background:#fff;"></div>
<div class="a" style="left:241px;top:305px;width:1px;height:265px;background:#a8a8a8;"></div>
<div class="a" style="left:313px;top:288px;width:1px;height:282px;background:#a8a8a8;"></div>
<div class="a" style="left:385px;top:288px;width:1px;height:282px;background:#a8a8a8;"></div>
<div class="a" style="left:457px;top:288px;width:1px;height:282px;background:#a8a8a8;"></div>
<div class="a" style="left:529px;top:288px;width:1px;height:282px;background:#a8a8a8;"></div>
<div class="a" style="left:601px;top:288px;width:1px;height:282px;background:#a8a8a8;"></div>
<div class="a" style="left:673px;top:288px;width:1px;height:282px;background:#a8a8a8;"></div>
<div class="a" style="left:745px;top:288px;width:1px;height:282px;background:#a8a8a8;"></div>
<div class="a" style="left:817px;top:288px;width:1px;height:282px;background:#a8a8a8;"></div>
<div class="a" style="left:241px;top:305px;width:647px;height:1px;background:#a8a8a8;"></div>
<div class="a" style="left:171px;top:324px;width:717px;height:1px;background:#a8a8a8;"></div>
<div class="a" style="left:171px;top:343px;width:717px;height:1px;background:#a8a8a8;"></div>
<div class="a" style="left:171px;top:362px;width:717px;height:1px;background:#a8a8a8;"></div>
<div class="a" style="left:171px;top:381px;width:717px;height:1px;background:#a8a8a8;"></div>
<div class="a" style="left:171px;top:400px;width:717px;height:1px;background:#a8a8a8;"></div>
<div class="a" style="left:171px;top:419px;width:717px;height:1px;background:#a8a8a8;"></div>
<div class="a" style="left:171px;top:438px;width:717px;height:1px;background:#a8a8a8;"></div>
<div class="a" style="left:171px;top:457px;width:717px;height:1px;background:#a8a8a8;"></div>
<div class="a" style="left:171px;top:476px;width:717px;height:1px;background:#a8a8a8;"></div>
<div class="a" style="left:171px;top:495px;width:717px;height:1px;background:#a8a8a8;"></div>
<div class="a" style="left:171px;top:514px;width:717px;height:1px;background:#a8a8a8;"></div>
<div class="a" style="left:171px;top:533px;width:717px;height:1px;background:#a8a8a8;"></div>
<div class="a" style="left:171px;top:552px;width:717px;height:1px;background:#a8a8a8;"></div>
<div class="a" style="left:168px;top:285px;width:723px;height:2px;background:#217346;"></div>
<div class="a" style="left:168px;top:571px;width:723px;height:2px;background:#217346;"></div>
<div class="a" style="left:168px;top:285px;width:2px;height:288px;background:#217346;"></div>
<div class="a" style="left:889px;top:285px;width:2px;height:288px;background:#217346;"></div>
<div class="a" style="left:886px;top:568px;width:7px;height:7px;background:#fff;"></div>
<div class="a" style="left:887px;top:569px;width:5px;height:5px;background:#217346;"></div>
<div class="a" style="left:1031px;top:229px;width:1px;height:436px;background:#9f9f9f;"></div>
<div class="a t hd" style="left:26px;top:214px;width:71px;color:#222">A</div>
<div class="a t hd" style="left:98px;top:214px;width:71px;color:#222">B</div>
<div class="a t hd" style="left:170px;top:214px;width:71px;color:#217346">C</div>
<div class="a t hd" style="left:242px;top:214px;width:71px;color:#217346">D</div>
<div class="a t hd" style="left:314px;top:214px;width:71px;color:#217346">E</div>
<div class="a t hd" style="left:386px;top:214px;width:71px;color:#217346">F</div>
<div class="a t hd" style="left:458px;top:214px;width:71px;color:#217346">G</div>
<div class="a t hd" style="left:530px;top:214px;width:71px;color:#217346">H</div>
<div class="a t hd" style="left:602px;top:214px;width:71px;color:#217346">I</div>
<div class="a t hd" style="left:674px;top:214px;width:71px;color:#217346">J</div>
<div class="a t hd" style="left:746px;top:214px;width:71px;color:#217346">K</div>
<div class="a t hd" style="left:818px;top:214px;width:71px;color:#217346">L</div>
<div class="a t hd" style="left:890px;top:214px;width:71px;color:#222">M</div>
<div class="a t hd" style="left:962px;top:214px;width:71px;color:#222">N</div>
<div class="a t rn" style="left:0px;top:234px;width:23px;color:#222">1</div>
<div class="a t rn" style="left:0px;top:253px;width:23px;color:#222">2</div>
<div class="a t rn" style="left:0px;top:272px;width:23px;color:#222">3</div>
<div class="a t rn" style="left:0px;top:291px;width:23px;color:#217346">4</div>
<div class="a t rn" style="left:0px;top:310px;width:23px;color:#217346">5</div>
<div class="a t rn" style="left:0px;top:329px;width:23px;color:#217346">6</div>
<div class="a t rn" style="left:0px;top:348px;width:23px;color:#217346">7</div>
<div class="a t rn" style="left:0px;top:367px;width:23px;color:#217346">8</div>
<div class="a t rn" style="left:0px;top:386px;width:23px;color:#217346">9</div>
<div class="a t rn" style="left:0px;top:405px;width:23px;color:#217346">10</div>
<div class="a t rn" style="left:0px;top:424px;width:23px;color:#217346">11</div>
<div class="a t rn" style="left:0px;top:443px;width:23px;color:#217346">12</div>
<div class="a t rn" style="left:0px;top:462px;width:23px;color:#217346">13</div>
<div class="a t rn" style="left:0px;top:481px;width:23px;color:#217346">14</div>
<div class="a t rn" style="left:0px;top:500px;width:23px;color:#217346">15</div>
<div class="a t rn" style="left:0px;top:519px;width:23px;color:#217346">16</div>
<div class="a t rn" style="left:0px;top:538px;width:23px;color:#217346">17</div>
<div class="a t rn" style="left:0px;top:557px;width:23px;color:#217346">18</div>
<div class="a t rn" style="left:0px;top:576px;width:23px;color:#222">19</div>
<div class="a t rn" style="left:0px;top:595px;width:23px;color:#222">20</div>
<div class="a t rn" style="left:0px;top:614px;width:23px;color:#222">21</div>
<div class="a t rn" style="left:0px;top:633px;width:23px;color:#222">22</div>
<div class="a t rn" style="left:0px;top:652px;width:23px;color:#222">23</div>
<div class="a" style="left:1032px;top:211px;width:18px;height:453px;background:#e6e6e6;"></div>
<div class="a" style="left:1035px;top:213px;width:15px;height:15px;background:#fff;border:1px solid #ababab;box-sizing:border-box;"></div>
<svg class="a" style="left:1039px;top:218px;" width="8" height="5" viewBox="0 0 8 5"><path d="M0 4.5H7.5L3.75 0Z" fill="#666"/></svg>
<div class="a" style="left:1035px;top:228px;width:15px;height:402px;background:#fff;border:1px solid #ababab;box-sizing:border-box;"></div>
<div class="a" style="left:1035px;top:630px;width:15px;height:20px;background:#dadada;"></div>
<div class="a" style="left:1035px;top:650px;width:15px;height:15px;background:#fff;border:1px solid #cfcfcf;box-sizing:border-box;"></div>
<svg class="a" style="left:1039px;top:656px;" width="8" height="5" viewBox="0 0 8 5"><path d="M0 0.5H7.5L3.75 5Z" fill="#666"/></svg>
<div class="a" style="left:0px;top:664px;width:1050px;height:29px;background:#e6e6e6;"></div>
<div class="a" style="left:0px;top:664px;width:97px;height:1px;background:#9f9f9f;"></div>
<div class="a" style="left:165px;top:664px;width:867px;height:1px;background:#9f9f9f;"></div>
<svg class="a" style="left:23px;top:673px;" width="6" height="9" viewBox="0 0 6 9"><path d="M5 0V8.5L0.5 4.25Z" fill="#c6c6c6"/></svg>
<svg class="a" style="left:53px;top:673px;" width="6" height="9" viewBox="0 0 6 9"><path d="M0.5 0V8.5L5 4.25Z" fill="#c6c6c6"/></svg>
<div class="a" style="left:97px;top:664px;width:69px;height:25px;background:#fff;border-left:1px solid #9f9f9f;border-right:1px solid #9f9f9f;box-sizing:border-box;"></div>
<div class="a" style="left:97px;top:687px;width:69px;height:2px;background:#217346;"></div>
<div class="a t" style="left:97px;top:669px;width:69px;text-align:center;font-size:13.5px;line-height:16px;color:#217346">Sheet1</div>
<svg class="a" style="left:199px;top:670px;" width="17" height="17" viewBox="0 0 17 17"><circle cx="8.2" cy="8" r="7.2" fill="none" stroke="#777" stroke-width="1.1"/><path d="M8.2 4V12 M4.2 8H12.2" stroke="#666" stroke-width="1.8"/></svg>
<div class="a" style="left:630px;top:673px;width:2px;height:2px;background:#aaa;"></div>
<div class="a" style="left:630px;top:677px;width:2px;height:2px;background:#aaa;"></div>
<div class="a" style="left:630px;top:681px;width:2px;height:2px;background:#aaa;"></div>
<div class="a" style="left:647px;top:671px;width:15px;height:15px;background:#fff;border:1px solid #ababab;box-sizing:border-box;"></div>
<svg class="a" style="left:652px;top:675px;" width="5" height="8" viewBox="0 0 5 8"><path d="M4.5 0V7L0.5 3.5Z" fill="#666"/></svg>
<div class="a" style="left:662px;top:671px;width:327px;height:15px;background:#fff;border:1px solid #ababab;box-sizing:border-box;"></div>
<div class="a" style="left:989px;top:671px;width:28px;height:15px;background:#dadada;"></div>
<div class="a" style="left:1019px;top:671px;width:15px;height:15px;background:#fff;border:1px solid #ababab;box-sizing:border-box;"></div>
<svg class="a" style="left:1025px;top:674px;" width="5" height="8" viewBox="0 0 5 8"><path d="M0.5 0V8L5 4Z" fill="#666"/></svg>
<div class="a" style="left:0px;top:692px;width:1050px;height:1px;background:#c8c8c8;"></div>
<div class="a" style="left:0px;top:693px;width:1050px;height:21px;background:#f3f3f3;"></div>
<div class="a" style="left:0px;top:713px;width:1050px;height:1px;background:#f8f8f8;"></div>
<div class="a" style="left:0px;top:714px;width:1050px;height:1px;background:#1d6b3e;"></div>
<div class="a t" style="left:4px;top:696px;font-size:12px;line-height:12px;color:#444;">就绪</div>
<div class="a" style="left:751px;top:693px;width:38px;height:21px;background:#c6c6c6;"></div>
<div class="a" style="left:764px;top:697px;width:11px;height:11px;background:#dcdcdc;"></div>
<div class="a" style="left:763px;top:696px;width:13px;height:1px;background:#666;"></div>
<div class="a" style="left:763px;top:708px;width:13px;height:1px;background:#666;"></div>
<div class="a" style="left:763px;top:696px;width:1px;height:13px;background:#666;"></div>
<div class="a" style="left:775px;top:696px;width:1px;height:13px;background:#666;"></div>
<div class="a" style="left:767px;top:696px;width:1px;height:13px;background:#666;"></div>
<div class="a" style="left:771px;top:696px;width:1px;height:13px;background:#666;"></div>
<div class="a" style="left:763px;top:700px;width:13px;height:1px;background:#666;"></div>
<div class="a" style="left:763px;top:704px;width:13px;height:1px;background:#666;"></div>
<div class="a" style="left:801px;top:696px;width:14px;height:1px;background:#666;"></div>
<div class="a" style="left:801px;top:709px;width:14px;height:1px;background:#666;"></div>
<div class="a" style="left:801px;top:696px;width:1px;height:14px;background:#666;"></div>
<div class="a" style="left:814px;top:696px;width:1px;height:14px;background:#666;"></div>
<div class="a" style="left:804px;top:698px;width:8px;height:1px;background:#666;"></div>
<div class="a" style="left:804px;top:706px;width:8px;height:1px;background:#666;"></div>
<div class="a" style="left:804px;top:698px;width:1px;height:9px;background:#666;"></div>
<div class="a" style="left:811px;top:698px;width:1px;height:9px;background:#666;"></div>
<div class="a" style="left:806px;top:700px;width:4px;height:1px;background:#666;"></div>
<div class="a" style="left:806px;top:702px;width:4px;height:1px;background:#666;"></div>
<div class="a" style="left:806px;top:704px;width:4px;height:1px;background:#666;"></div>
<div class="a" style="left:839px;top:696px;width:14px;height:1px;background:#666;"></div>
<div class="a" style="left:839px;top:709px;width:14px;height:1px;background:#666;"></div>
<div class="a" style="left:839px;top:696px;width:1px;height:14px;background:#666;"></div>
<div class="a" style="left:852px;top:696px;width:1px;height:14px;background:#666;"></div>
<div class="a" style="left:839px;top:703px;width:9px;height:1px;background:#666;"></div>
<div class="a" style="left:847px;top:696px;width:1px;height:8px;background:#666;"></div>
<div class="a" style="left:843px;top:696px;width:1px;height:8px;background:#666;"></div>
<div class="a" style="left:870px;top:702px;width:7px;height:2px;background:#666;"></div>
<div class="a" style="left:880px;top:702px;width:100px;height:1px;background:#a6a6a6;"></div>
<div class="a" style="left:928px;top:697px;width:5px;height:11px;background:#666;"></div>
<div class="a" style="left:983px;top:702px;width:8px;height:2px;background:#555;"></div>
<div class="a" style="left:986px;top:699px;width:2px;height:8px;background:#555;"></div>
<div class="a t" style="left:1003px;top:696px;font-size:13px;line-height:13px;color:#444;letter-spacing:-0.6px">100%</div>
</body></html>
